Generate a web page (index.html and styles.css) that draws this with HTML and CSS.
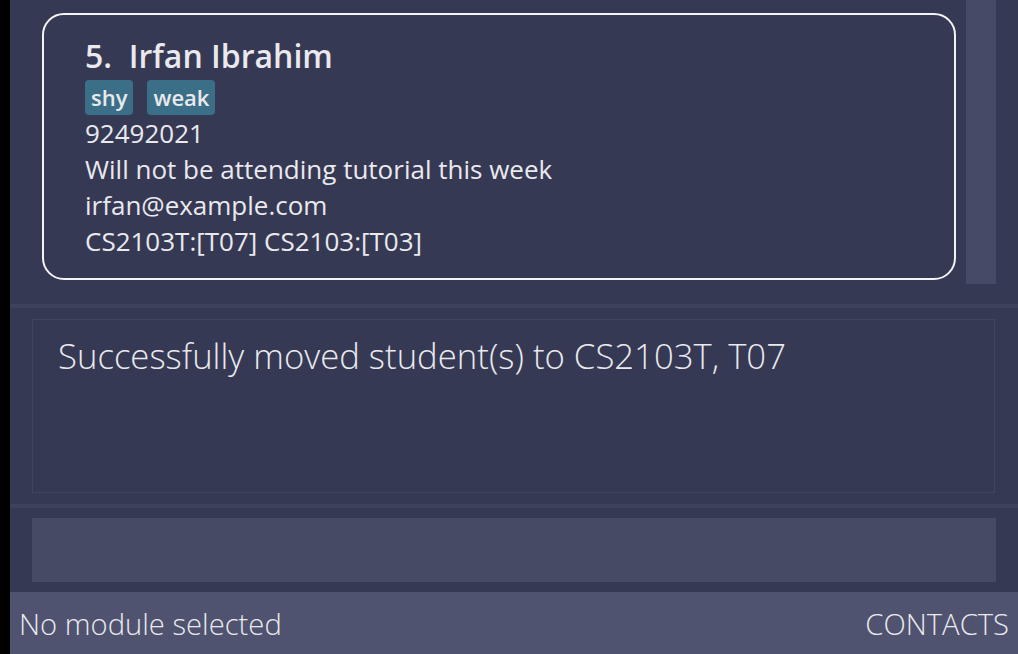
FILE: index.html
```html
<!DOCTYPE html>
<html>
<head>
<meta charset="utf-8">
<link rel="stylesheet" href="styles.css">
</head>
<body>
<div class="app">
  <div class="gutter"></div>
  <div class="main">
    <section class="list-panel">
      <div class="list-scroll">
        <div class="card">
          <div class="name">5.&nbsp;&nbsp;Irfan Ibrahim</div>
          <div class="tags"><span class="tag">shy</span><span class="tag">weak</span></div>
          <div class="line">92492021</div>
          <div class="line">Will not be attending tutorial this week</div>
          <div class="line">irfan@example.com</div>
          <div class="line">CS2103T:[T07] CS2103:[T03]</div>
        </div>
      </div>
      <div class="scrollbar"></div>
    </section>
    <div class="sep"></div>
    <section class="result-panel">
      <div class="result-box">Successfully moved student(s) to CS2103T, T07</div>
    </section>
    <div class="sep"></div>
    <section class="command-panel">
      <div class="command-box"></div>
    </section>
    <footer class="status">
      <span>No module selected</span>
      <span>CONTACTS</span>
    </footer>
  </div>
</div>
</body>
</html>
```

FILE: styles.css
```css
html, body {
  margin: 0;
  padding: 0;
  background: #000;
  height: 100%;
  overflow: hidden;
}
.app {
  display: flex;
  height: 654px;
  font-family: "Open Sans", "Noto Sans", sans-serif;
  color: #e9e9ee;
}
.gutter {
  width: 10px;
  background: #000;
  flex: none;
}
.main {
  flex: 1;
  display: flex;
  flex-direction: column;
  background: #363953;
}
.list-panel {
  height: 304px;
  display: flex;
  box-sizing: border-box;
}
.list-scroll {
  flex: 1;
  padding: 13px 10px 0 32px;
}
.card {
  box-sizing: border-box;
  height: 267px;
  border: 2px solid #f4f4f6;
  border-radius: 22px;
  padding: 21px 0 0 41px;
}
.name {
  font-size: 32px;
  font-weight: 600;
  line-height: 40px;
}
.tags {
  display: flex;
  gap: 14px;
  margin-top: 4px;
}
.tag {
  background: #3b6f87;
  border-radius: 4px;
  font-size: 22px;
  font-weight: 600;
  line-height: 35px;
  padding: 0 6px;
}
.line {
  font-size: 26px;
  line-height: 36px;
}
.scrollbar {
  width: 30px;
  height: 284px;
  background: #474a66;
  margin-right: 22px;
}
.sep {
  height: 4px;
  background: #3d415b;
  flex: none;
}
.result-panel {
  height: 196px;
  box-sizing: border-box;
  padding: 11px 23px 11px 22px;
}
.result-box {
  box-sizing: border-box;
  height: 174px;
  border: 1px solid #41455e;
  padding: 14px 0 0 25px;
  font-size: 34.7px;
  font-weight: 300;
  line-height: 44px;
}
.command-panel {
  height: 84px;
  box-sizing: border-box;
  padding: 10px 22px 0 22px;
}
.command-box {
  height: 64px;
  background: #464a64;
}
.status {
  flex: 1;
  background: #4f536f;
  display: flex;
  justify-content: space-between;
  align-items: center;
  padding: 2px 9px 0 9px;
  font-size: 29.2px;
  font-weight: 300;
}
```
